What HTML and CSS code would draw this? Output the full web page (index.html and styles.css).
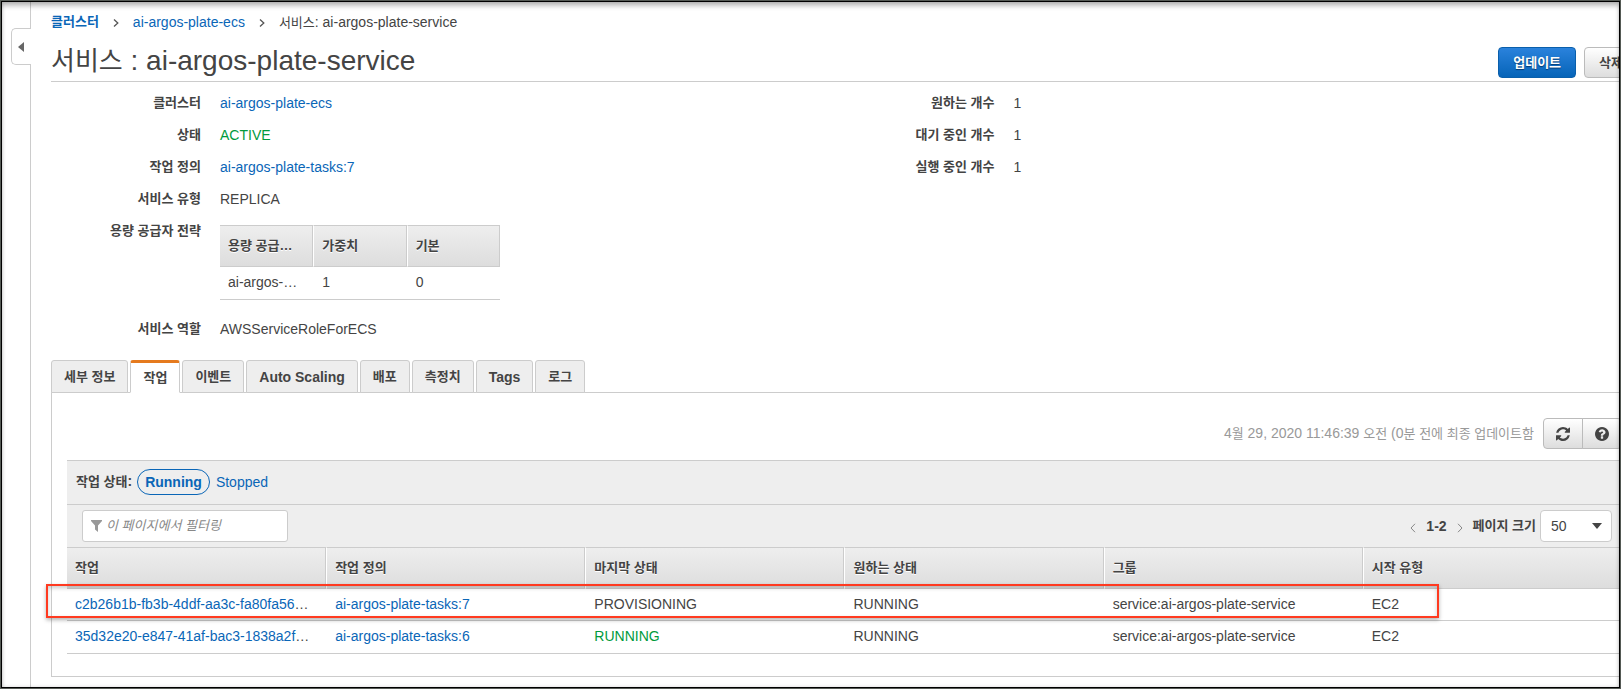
FILE: index.html
```html
<!DOCTYPE html>
<html lang="ko">
<head>
<meta charset="utf-8">
<meta name="viewport" content="width=device-width, initial-scale=1">
<title>서비스: ai-argos-plate-service</title>
<link rel="stylesheet" href="styles.css">
</head>
<body>
<div class="frame">
  <aside class="rail">
    <button class="rail-toggle" type="button" aria-label="탐색 열기">
      <svg width="6" height="10" viewBox="0 0 6 10" aria-hidden="true"><path d="M6 0v10L0 5z" fill="#666"/></svg>
    </button>
  </aside>
  <main class="main">
    <nav class="crumbs" aria-label="이동 경로">
      <a class="ko strong" href="#">클러스터</a>
      <svg class="crumb-sep" width="6" height="8" viewBox="0 0 6 8" aria-hidden="true"><path d="M1 .5 4.8 4 1 7.500" fill="none" stroke="#555" stroke-width="1.300"/></svg>
      <a href="#">ai-argos-plate-ecs</a>
      <svg class="crumb-sep" width="6" height="8" viewBox="0 0 6 8" aria-hidden="true"><path d="M1 .5 4.8 4 1 7.500" fill="none" stroke="#555" stroke-width="1.300"/></svg>
      <span><span class="ko">서비스</span>: ai-argos-plate-service</span>
    </nav>
    <header class="title-row">
      <h1 class="title"><span class="title-ko">서비스</span> : ai-argos-plate-service</h1>
      <div class="actions">
        <button class="btn btn-primary" type="button">업데이트</button>
        <button class="btn" type="button">삭제</button>
      </div>
    </header>

    <section class="details">
      <dl class="facts">
        <dt>클러스터</dt><dd><a href="#">ai-argos-plate-ecs</a></dd>
        <dt>상태</dt><dd class="ok">ACTIVE</dd>
        <dt>작업 정의</dt><dd><a href="#">ai-argos-plate-tasks:7</a></dd>
        <dt>서비스 유형</dt><dd>REPLICA</dd>
        <dt>용량 공급자 전략</dt>
        <dd class="strategy">
          <table class="grid strategy-grid">
            <thead><tr><th scope="col">용량 공급…</th><th scope="col">가중치</th><th scope="col">기본</th></tr></thead>
            <tbody><tr><td>ai-argos-…</td><td>1</td><td>0</td></tr></tbody>
          </table>
        </dd>
        <dt>서비스 역할</dt><dd>AWSServiceRoleForECS</dd>
      </dl>
      <dl class="facts">
        <dt>원하는 개수</dt><dd>1</dd>
        <dt>대기 중인 개수</dt><dd>1</dd>
        <dt>실행 중인 개수</dt><dd>1</dd>
      </dl>
    </section>

    <div class="tabs" role="tablist">
      <button class="tab ko" role="tab" type="button">세부 정보</button>
      <button class="tab ko active" role="tab" type="button" aria-selected="true">작업</button>
      <button class="tab ko" role="tab" type="button">이벤트</button>
      <button class="tab" role="tab" type="button">Auto Scaling</button>
      <button class="tab ko" role="tab" type="button">배포</button>
      <button class="tab ko" role="tab" type="button">측정치</button>
      <button class="tab" role="tab" type="button">Tags</button>
      <button class="tab ko" role="tab" type="button">로그</button>
    </div>

    <section class="panel" role="tabpanel">
      <div class="updated">
        <p class="stamp">4<span class="ko">월</span> 29, 2020 11:46:39 <span class="ko">오전</span> (0<span class="ko">분 전에 최종 업데이트함</span></p>
        <div class="btn-group">
          <button class="btn icon-btn" type="button" aria-label="새로 고침">
            <svg width="14" height="14" viewBox="0 0 1536 1536" aria-hidden="true"><path fill="#444" d="M1511 928q0 5-1 7-64 268-268 434.500T764 1536q-146 0-282.500-55T238 1324l-129 129q-19 19-45 19t-45-19-19-45V960q0-26 19-45t45-19h448q26 0 45 19t19 45-19 45l-137 137q71 66 161 102t187 36q134 0 250-65t186-179q11-17 53-117 8-23 30-23h192q13 0 22.500 9.500t9.500 22.500zm25-800v448q0 26-19 45t-45 19h-448q-26 0-45-19t-19-45 19-45l138-138Q969 256 768 256q-134 0-250 65T332 500q-11 17-53 117-8 23-30 23H50q-13 0-22.500-9.500T18 608v-7q65-268 270-434.500T768 0q146 0 284 55.500T1297 212l130-129q19-19 45-19t45 19 19 45z"/></svg>
          </button>
          <button class="btn icon-btn" type="button" aria-label="도움말">
            <svg width="14" height="14" viewBox="0 0 1536 1536" aria-hidden="true"><path fill="#444" fill-rule="evenodd" d="M896 1248v-192q0-14-9-23t-23-9H672q-14 0-23 9t-9 23v192q0 14 9 23t23 9h192q14 0 23-9t9-23zm256-672q0-88-55.500-163T958 297t-170-41q-243 0-371 213-15 24 8 42l132 100q7 6 19 6 16 0 25-12 53-68 86-92 34-24 86-24 48 0 85.500 26t37.500 59q0 38-20 61t-68 45q-63 28-115.500 86.500T640 892v36q0 14 9 23t23 9h192q14 0 23-9t9-23q0-19 21.500-49.500T972 829q32-18 49-28.500t46-35 44.500-48 28-60.500 12.500-81zm384 192q0 209-103 385.500T1153.500 1433 768 1536t-385.500-103T103 1153.500 0 768t103-385.500T382.500 103 768 0t385.500 103T1433 382.500 1536 768z"/></svg>
          </button>
        </div>
      </div>

      <div class="status-bar">
        <span class="status-label"><span class="ko">작업 상태</span>:</span>
        <a class="pill" href="#">Running</a>
        <a href="#">Stopped</a>
      </div>

      <div class="filter-bar">
        <label class="search">
          <svg width="11" height="12" viewBox="0 0 11 12" aria-hidden="true"><path fill="#999" d="M0 0h11v1L7 5.500V12L4 9.500v-4L0 1z"/></svg>
          <input type="text" placeholder="이 페이지에서 필터링" aria-label="이 페이지에서 필터링">
        </label>
        <div class="pager">
          <button class="page-btn" type="button" aria-label="이전"><svg width="6" height="10" viewBox="0 0 6 10" aria-hidden="true"><path d="M5 .8 1 5l4 4.200" fill="none" stroke="#888"/></svg></button>
          <span class="range">1-2</span>
          <button class="page-btn" type="button" aria-label="다음"><svg width="6" height="10" viewBox="0 0 6 10" aria-hidden="true"><path d="M1 .8 5 5 1 9.200" fill="none" stroke="#888"/></svg></button>
          <label class="ko strong size-label" for="page-size">페이지 크기</label>
          <span class="select">
            <select id="page-size"><option>50</option></select>
            <svg class="caret" width="10" height="6" viewBox="0 0 10 6" aria-hidden="true"><path d="M0 0h10L5 6z" fill="#444"/></svg>
          </span>
        </div>
      </div>

      <div class="task-wrap">
        <table class="grid task-grid">
          <thead><tr><th scope="col">작업</th><th scope="col">작업 정의</th><th scope="col">마지막 상태</th><th scope="col">원하는 상태</th><th scope="col">그룹</th><th scope="col">시작 유형</th></tr></thead>
          <tbody>
            <tr><td><a href="#">c2b26b1b-fb3b-4ddf-aa3c-fa80fa56</a>…</td><td><a href="#">ai-argos-plate-tasks:7</a></td><td>PROVISIONING</td><td>RUNNING</td><td>service:ai-argos-plate-service</td><td>EC2</td></tr>
            <tr><td><a href="#">35d32e20-e847-41af-bac3-1838a2f</a>…</td><td><a href="#">ai-argos-plate-tasks:6</a></td><td class="ok">RUNNING</td><td>RUNNING</td><td>service:ai-argos-plate-service</td><td>EC2</td></tr>
          </tbody>
        </table>
        <div class="highlight"></div>
      </div>
    </section>
  </main>
</div>
</body>
</html>
```
FILE: styles.css
```css
* { box-sizing: border-box; }

body {
  margin: 0;
  background: #fff;
  color: #444;
  font: 14px/20px "Liberation Sans", "Noto Sans CJK KR", sans-serif;
}

a { color: #0a66b7; text-decoration: none; }
button, input, select { font: inherit; color: inherit; }

.ko { font-size: 13px; }
.strong { font-weight: bold; }
.ok { color: #009a3c; }

/* Window frame */
.frame {
  position: relative;
  display: flex;
  min-height: 100vh;
  overflow: hidden;
}
.frame::after {
  content: "";
  position: absolute;
  inset: 0;
  border: 1px solid #555a55;
  box-shadow: inset 0 0 0 1px #000, inset 0 5px 5px rgba(0, 0, 0, .25), inset 0 0 4px rgba(0, 0, 0, .25);
  pointer-events: none;
}

/* Collapsed side navigation */
.rail {
  flex: 0 0 31px;
  padding: 28px 0 0 11px;
  border-right: 1px solid #ccc;
}
.rail-toggle {
  display: flex;
  align-items: center;
  width: 20px;
  height: 37px;
  padding: 0 0 0 6px;
  border: 1px solid #ccc;
  border-right: 0;
  border-radius: 5px 0 0 5px;
  background: #fff;
  margin-right: -1px;
}

/* The content column runs under the right edge of the frame */
.main {
  flex: 1;
  min-width: 0;
  margin: 0 -17px 0 20px;
  padding: 12px 0;
}

.crumbs { display: flex; align-items: center; height: 20px; }
.crumb-sep { margin: 2px 14px 0; }

.title-row {
  display: flex;
  justify-content: space-between;
  align-items: flex-end;
  min-height: 46px;
  margin-top: 4px;
  padding-bottom: 3px;
  border-bottom: 1px solid #ccc;
}
.title { margin: 0; font-size: 28px; font-weight: normal; line-height: 34px; }
.title-ko { font-size: 26px; }
.actions { display: flex; gap: 8px; }

.btn {
  height: 31px;
  padding: 0 14px;
  border: 1px solid #bbb;
  border-radius: 4px;
  background: linear-gradient(#fff, #ddd);
  font-size: 13px;
  font-weight: bold;
}
.btn-primary {
  border-color: #0a5fab;
  background: linear-gradient(#2a82dc, #0664b8);
  color: #fff;
  text-shadow: 0 1px 1px #043a70;
}

/* Service details */
.details {
  display: grid;
  grid-template-columns: 1fr 1fr;
  align-items: start;
  padding-top: 5px;
}
.facts {
  display: grid;
  grid-template-columns: 150px 1fr;
  column-gap: 19px;
  margin: 0;
  line-height: 32px;
}
.facts dt { font-size: 13px; font-weight: bold; text-align: right; }
.facts dd { margin: 0; }
.facts .strategy { padding: 10px 0 13px; line-height: 20px; }

/* Data tables */
.grid {
  table-layout: fixed;
  border-collapse: separate;
  border-spacing: 0;
  width: 100%;
}
.grid th {
  height: 42px;
  padding: 0 8px;
  border: 1px solid #ccc;
  border-left: 1px solid #fff;
  background: linear-gradient(#eee, #ddd);
  font-size: 13px;
  text-align: left;
  text-shadow: 0 1px 0 #fff;
}
.grid th:first-child { border-left: 0; }
.grid td {
  height: 32px;
  padding: 0 8px 2px;
  border-bottom: 1px solid #ccc;
  white-space: nowrap;
}
.grid tr:last-child td { height: 33px; }
.grid td + td { padding-left: 9px; }
.strategy-grid { width: 280px; }

/* Tabs */
.tabs { display: flex; gap: 2px; margin-top: 15px; }
.tab {
  height: 33px;
  padding: 0 12px;
  border: 1px solid #ccc;
  border-radius: 3px 3px 0 0;
  background: #eee;
  font-weight: bold;
}
.tab.active {
  border-top: 3px solid #e57a1e;
  border-bottom-color: #fff;
  background: #fff;
  z-index: 1;
}
.tabs .tab { margin-bottom: -1px; }

.panel {
  padding: 25px 15px 22px;
  border: 1px solid #ccc;
}

.updated { display: flex; justify-content: flex-end; align-items: center; gap: 9px; }
.stamp { margin: 0; color: #999; }
.btn-group { display: flex; }
.icon-btn { display: flex; align-items: center; justify-content: center; width: 40px; padding: 0; }
.icon-btn:first-child { border-radius: 4px 0 0 4px; margin-right: -1px; }
.icon-btn:last-child { border-radius: 0 4px 4px 0; }

.status-bar {
  display: flex;
  align-items: center;
  height: 44px;
  margin-top: 11px;
  padding: 0 0 2px 9px;
  border-top: 1px solid #ccc;
  background: #eee;
}
.status-label { font-weight: bold; margin-right: 5px; }
.pill {
  margin-right: 6px;
  padding: 2px 7px;
  border: 1px solid #0a66b7;
  border-radius: 13px;
  font-weight: bold;
}

.filter-bar {
  display: flex;
  align-items: center;
  justify-content: space-between;
  height: 43px;
  padding: 0 10px 0 15px;
  border-top: 1px solid #ccc;
  background: #eee;
}
.search {
  display: flex;
  align-items: center;
  gap: 4px;
  width: 206px;
  height: 32px;
  padding: 0 8px;
  border: 1px solid #ccc;
  border-radius: 3px;
  background: #fff;
}
.search input {
  flex: 1;
  min-width: 0;
  padding: 0;
  border: 0;
  outline: 0;
  background: none;
  font-size: 13px;
}
.search input::placeholder { color: #888; font-style: italic; }

.pager { display: flex; align-items: center; }
.page-btn { display: flex; padding: 3px 0 0; border: 0; background: none; }
.range { margin: 0 10px; font-weight: bold; }
.size-label { margin: 0 4px 0 10px; }
.select { position: relative; }
.select select {
  display: block;
  appearance: none;
  width: 72px;
  height: 32px;
  padding: 0 10px;
  border: 1px solid #ccc;
  border-radius: 4px;
  background: #fff;
}
.caret { position: absolute; right: 10px; top: 13px; pointer-events: none; }

.task-wrap { position: relative; }
.highlight {
  position: absolute;
  top: 37px;
  left: -21px;
  right: 183px;
  height: 34px;
  border: 2px solid #ff3a20;
  box-shadow: 0 2px 4px rgba(0, 0, 0, .3), inset 0 2px 4px rgba(0, 0, 0, .2);
  pointer-events: none;
}
```
